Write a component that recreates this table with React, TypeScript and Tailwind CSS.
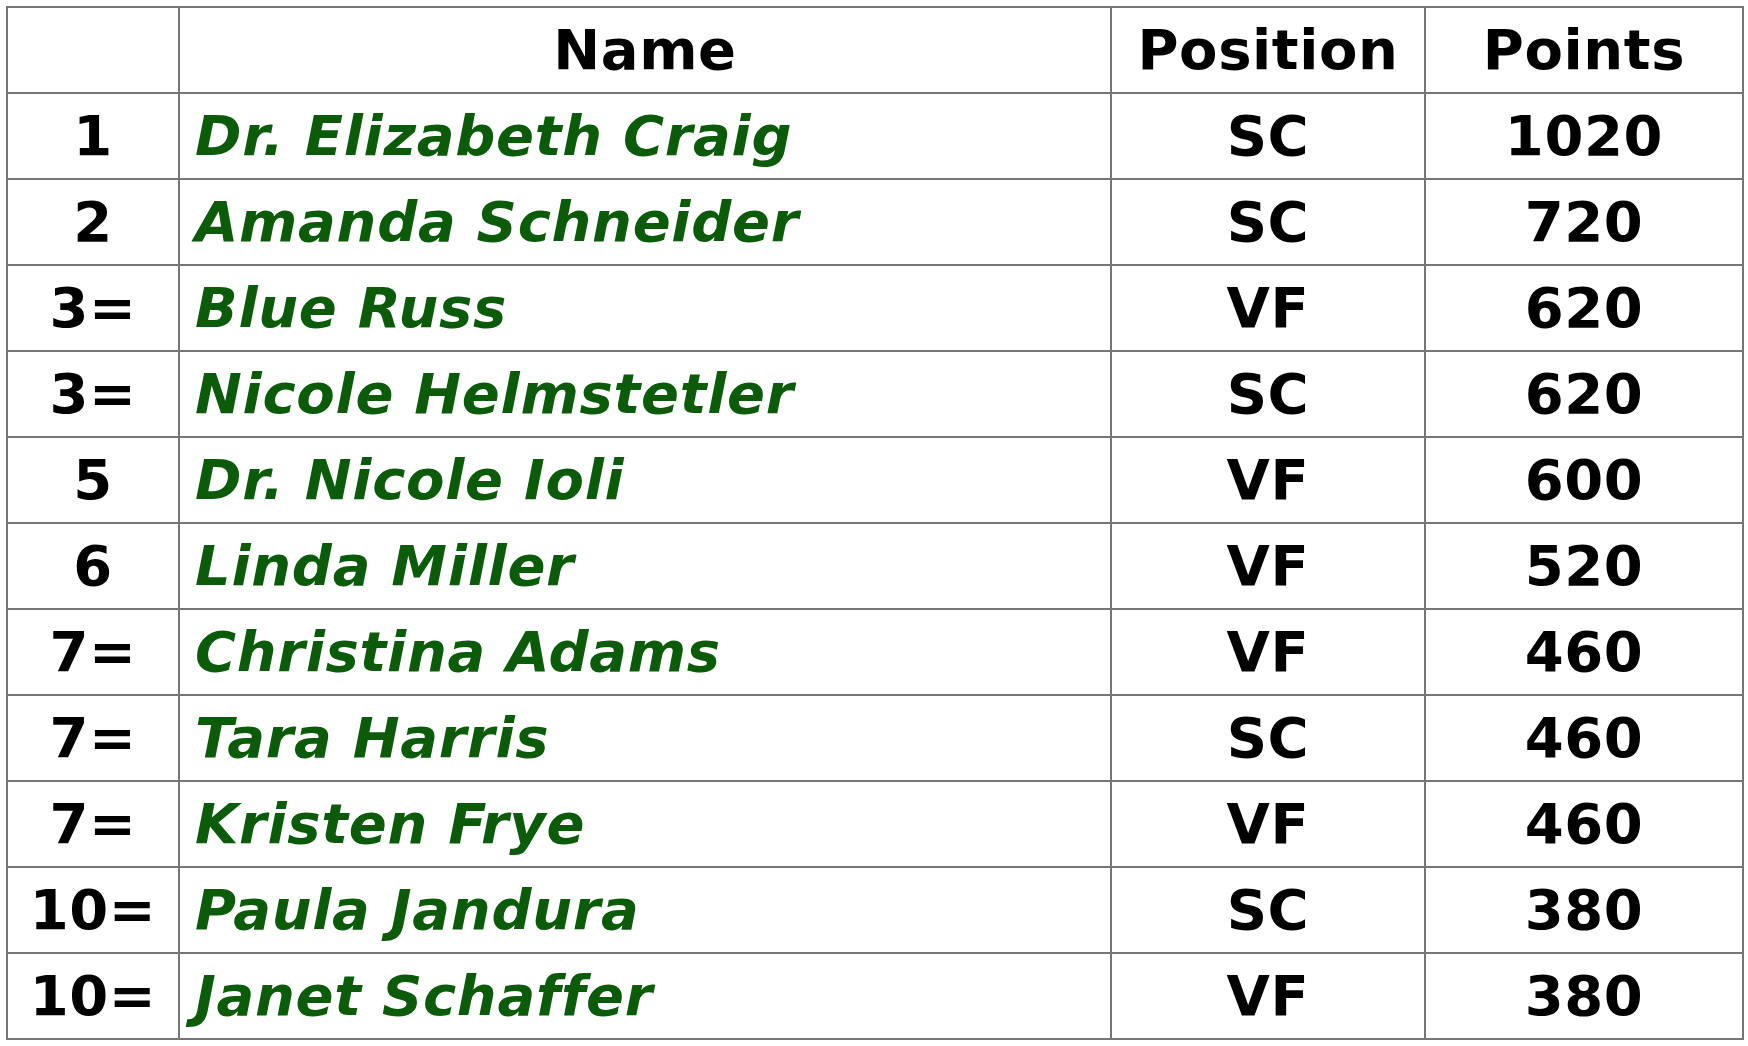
const rows = [
  { rank: "1", name: "Dr. Elizabeth Craig", pos: "SC", pts: "1020" },
  { rank: "2", name: "Amanda Schneider", pos: "SC", pts: "720" },
  { rank: "3=", name: "Blue Russ", pos: "VF", pts: "620" },
  { rank: "3=", name: "Nicole Helmstetler", pos: "SC", pts: "620" },
  { rank: "5", name: "Dr. Nicole Ioli", pos: "VF", pts: "600" },
  { rank: "6", name: "Linda Miller", pos: "VF", pts: "520" },
  { rank: "7=", name: "Christina Adams", pos: "VF", pts: "460" },
  { rank: "7=", name: "Tara Harris", pos: "SC", pts: "460" },
  { rank: "7=", name: "Kristen Frye", pos: "VF", pts: "460" },
  { rank: "10=", name: "Paula Jandura", pos: "SC", pts: "380" },
  { rank: "10=", name: "Janet Schaffer", pos: "VF", pts: "380" },
];

const cell =
  "h-[86px] border-r-2 border-b-2 border-[#767676] flex items-center";

export default function App() {
  return (
    <div className="w-[1748px] h-[1046px] bg-white pt-[6px] pl-[6px] font-['DejaVu_Sans',Verdana,sans-serif] font-bold text-[56px] leading-none tracking-[0.6px] text-black">
      <div className="grid grid-cols-[172px_932px_314px_318px] w-max border-l-2 border-t-2 border-[#767676]">
        <div className={`${cell} justify-center`}></div>
        <div className={`${cell} justify-center`}>Name</div>
        <div className={`${cell} justify-center`}>Position</div>
        <div className={`${cell} justify-center`}>Points</div>
        {rows.map((r, i) => (
          <div key={i} className="contents">
            <div className={`${cell} justify-center`}>{r.rank}</div>
            <div className={`${cell} pl-[15px] italic tracking-[0.7px] text-[#0b5b0b]`}>{r.name}</div>
            <div className={`${cell} justify-center`}>{r.pos}</div>
            <div className={`${cell} justify-center`}>{r.pts}</div>
          </div>
        ))}
      </div>
    </div>
  );
}
